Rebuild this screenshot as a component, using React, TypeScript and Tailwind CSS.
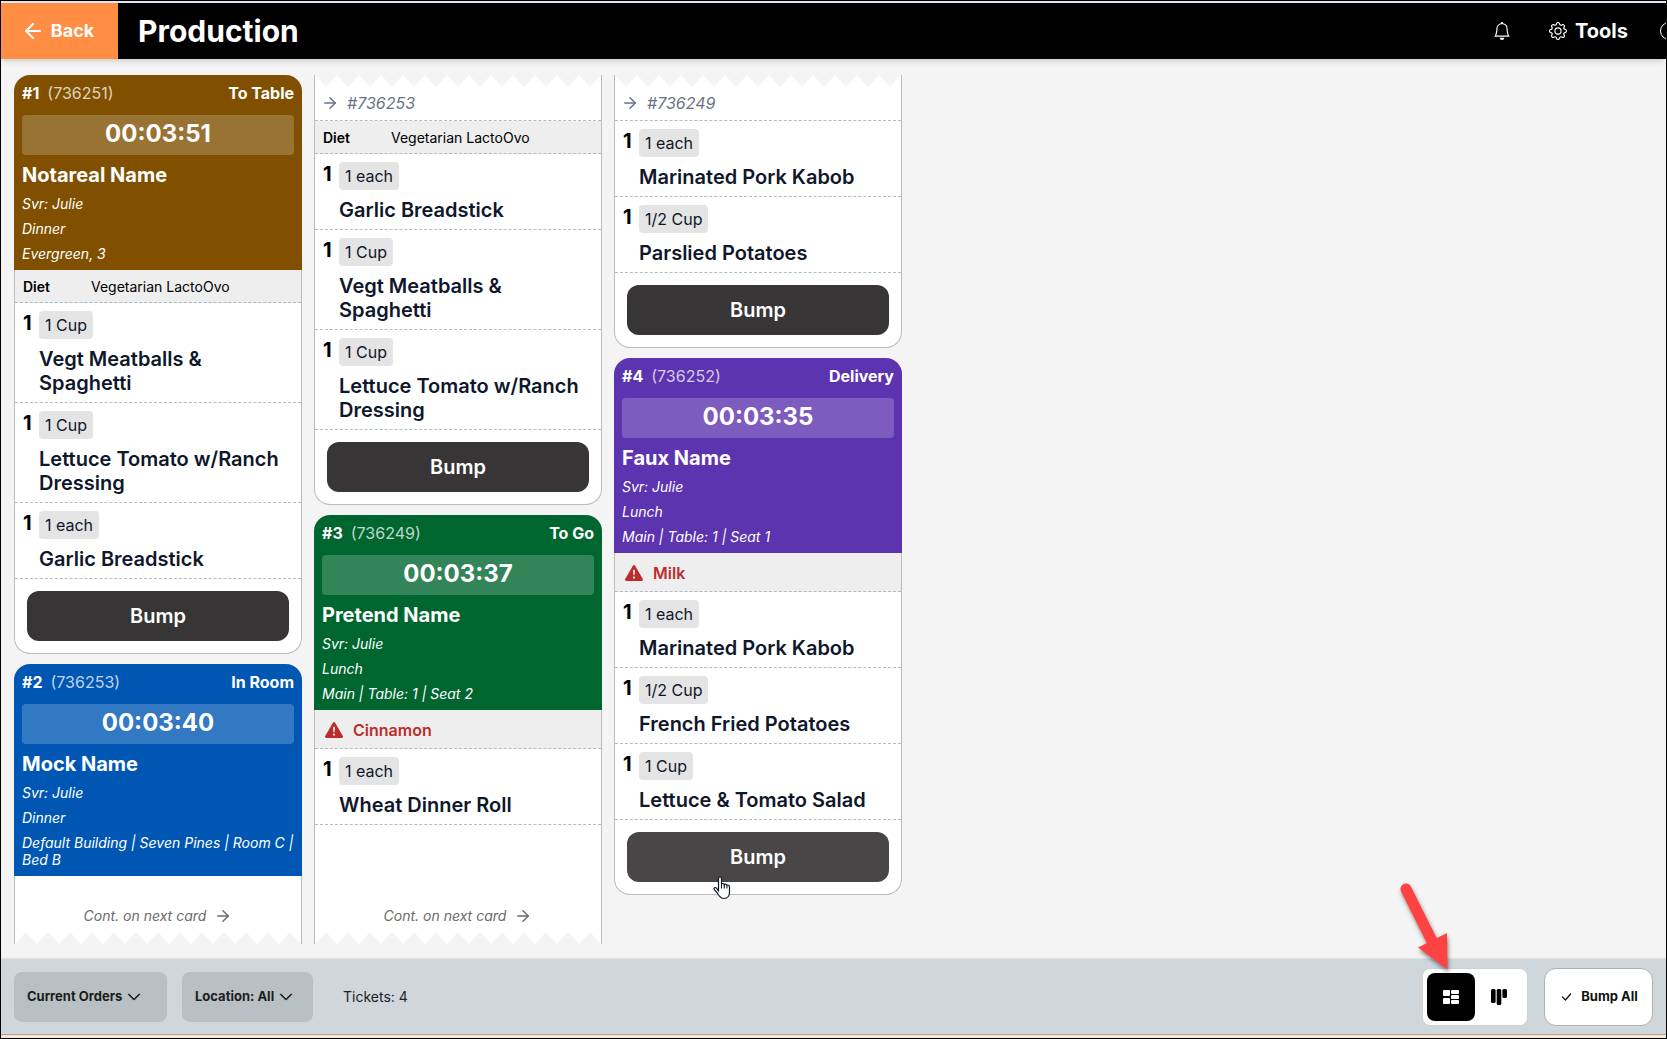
import type { ReactNode } from "react";
import clsx from "clsx";
import { ArrowLeft, ArrowRight } from "lucide-react";
import { BsBell, BsCheckLg, BsChevronDown, BsExclamationTriangleFill, BsGear } from "react-icons/bs";

interface Item {
  portion: string;
  name: string;
}

interface Ticket {
  number: number;
  order: string;
  type: string;
  color: string;
  timer: string;
  name: string;
  details: string[];
}

const notareal: Ticket = {
  number: 1,
  order: "736251",
  type: "To Table",
  color: "bg-[#805000]",
  timer: "00:03:51",
  name: "Notareal Name",
  details: ["Svr: Julie", "Dinner", "Evergreen, 3"],
};

const mock: Ticket = {
  number: 2,
  order: "736253",
  type: "In Room",
  color: "bg-[#0057b3]",
  timer: "00:03:40",
  name: "Mock Name",
  details: ["Svr: Julie", "Dinner", "Default Building | Seven Pines | Room C | Bed B"],
};

const pretend: Ticket = {
  number: 3,
  order: "736249",
  type: "To Go",
  color: "bg-[#00662f]",
  timer: "00:03:37",
  name: "Pretend Name",
  details: ["Svr: Julie", "Lunch", "Main | Table: 1 | Seat 2"],
};

const faux: Ticket = {
  number: 4,
  order: "736252",
  type: "Delivery",
  color: "bg-[#5c34b0]",
  timer: "00:03:35",
  name: "Faux Name",
  details: ["Svr: Julie", "Lunch", "Main | Table: 1 | Seat 1"],
};

/* Torn paper edge, drawn in the page background over the white card */
function TornEdge({ side }: { side: "top" | "bottom" }) {
  const id = `torn-${side}`;
  return (
    <svg className="block h-3 w-full shrink-0" aria-hidden="true">
      <defs>
        <pattern id={id} width="22" height="12" patternUnits="userSpaceOnUse">
          <path d={side === "top" ? "M0 0H22L11 12Z" : "M0 12H22L11 0Z"} fill="#f4f4f4" />
        </pattern>
      </defs>
      <rect width="100%" height="12" fill={`url(#${id})`} />
    </svg>
  );
}

function TicketHeader({ ticket }: { ticket: Ticket }) {
  return (
    <header className={clsx("rounded-t-2xl p-2 text-white", ticket.color)}>
      <div className="flex items-center justify-between text-base leading-5">
        <div className="flex gap-2">
          <span className="font-bold">#{ticket.number}</span>
          <span className="text-white/75">({ticket.order})</span>
        </div>
        <span className="font-bold">{ticket.type}</span>
      </div>
      <div className="mt-3 flex h-10 items-center justify-center rounded bg-white/20 pb-0.5 text-2xl font-bold">
        {ticket.timer}
      </div>
      <h2 className="mt-2 text-xl leading-6 font-bold">{ticket.name}</h2>
      {ticket.details.map((line) => (
        <p key={line} className="mt-2 text-sm leading-[17px] font-[450] italic">
          {line}
        </p>
      ))}
    </header>
  );
}

function Diet({ value }: { value: string }) {
  return (
    <div className="flex h-[33px] items-center border-b border-dashed border-[#afbec5] bg-[#eeeeee] px-2 pt-0.5 text-sm text-black">
      <span className="w-[68px] font-semibold">Diet</span>
      <span>{value}</span>
    </div>
  );
}

function Allergy({ value }: { value: string }) {
  return (
    <div className="flex h-[39px] items-center gap-2.5 border-b border-dashed border-[#afbec5] bg-[#eeeeee] px-2.5 pt-0.5 text-base font-semibold text-[#bd2c2c]">
      <BsExclamationTriangleFill className="h-[18px] w-[18px]" />
      {value}
    </div>
  );
}

function ItemList({ items }: { items: Item[] }) {
  return (
    <ul>
      {items.map((item) => (
        <li key={item.name} className="flex items-start gap-2 border-b border-dashed border-[#afbec5] px-2 pt-2 pb-[7px]">
          <span className="w-2 shrink-0 text-xl leading-6 font-bold text-black">1</span>
          <div>
            <span className="inline-flex h-7 items-center rounded bg-[#e4e4e4] px-1.5 align-top text-base text-slate-900">
              {item.portion}
            </span>
            <p className="mt-2 text-xl leading-6 font-semibold text-slate-900">{item.name}</p>
          </div>
        </li>
      ))}
    </ul>
  );
}

function BumpButton({ hovered }: { hovered?: boolean }) {
  return (
    <div className="relative p-3">
      <button
        type="button"
        className={clsx(
          "h-[50px] w-full rounded-xl text-xl font-semibold text-white",
          hovered ? "bg-[#484646]" : "bg-[#383536]",
        )}
      >
        Bump
      </button>
      {hovered && <HandCursor />}
    </div>
  );
}

function HandCursor() {
  return (
    <svg className="absolute top-14 left-[98px] h-6 w-[18px]" viewBox="0 0 18 24" aria-hidden="true">
      <path
        d="M5.5 14.8V2.7C5.5 1.5 6.2 1 7 1s1.500.5 1.500 1.700V8c.3-.7 2.500-.7 2.800.5.600-.6 2.300-.3 2.600.7 1-.5 2.600 0 2.600 1.500v5.300c0 3-1.600 6.500-5.500 6.500-3.600 0-5-2.500-6.300-4.800L1.200 13.500c-.8-1.400.8-2.600 2-1.600Z"
        fill="#fff"
        stroke="#111827"
        strokeWidth="1.2"
      />
      <path d="M8.500 7.500v5M11.300 8.500v4M13.900 9.200v3.300" stroke="#111827" strokeWidth="1.1" />
    </svg>
  );
}

function CardBody({ children, last, grow }: { children: ReactNode; last?: boolean; grow?: boolean }) {
  return (
    <div
      className={clsx(
        "flex flex-col border-x border-[#bcbcbc] bg-white",
        last && "rounded-b-2xl border-b",
        grow && "flex-1",
      )}
    >
      {children}
    </div>
  );
}

function ContinuedFrom({ order }: { order: string }) {
  return (
    <>
      <TornEdge side="top" />
      <div className="flex h-[34px] items-center gap-2 border-b border-dashed border-[#afbec5] px-1.5 pb-0.5 text-base text-gray-500 italic">
        <ArrowRight className="h-[18px] w-[18px]" />
        #{order}
      </div>
    </>
  );
}

function ContinuedOnNext() {
  return (
    <div className="mt-auto">
      <div className="flex items-center justify-center gap-2 pb-1.5 text-sm text-[#6b6b6b] italic">
        Cont. on next card
        <ArrowRight className="h-[18px] w-[18px]" />
      </div>
      <TornEdge side="bottom" />
    </div>
  );
}

function TopBar() {
  return (
    <header className="relative z-10 flex h-[58px] shrink-0 items-stretch overflow-x-clip border-t-2 border-slate-200 bg-black text-white shadow-md">
      <button type="button" className="flex w-[117px] shrink-0 items-center justify-center gap-1.5 bg-[#ff8d43] pr-1 text-lg font-bold">
        <ArrowLeft className="h-6 w-6" />
        Back
      </button>
      <h1 className="flex items-center pl-5 text-[30px] font-bold">Production</h1>
      <div className="ml-auto flex items-center">
        <button type="button" aria-label="Notifications" className="mr-[38px]">
          <BsBell className="h-[18px] w-[18px]" />
        </button>
        <button type="button" className="flex items-center gap-2 text-xl font-bold">
          <BsGear className="h-[18px] w-[18px]" />
          Tools
        </button>
        <button type="button" aria-label="Help" className="-mr-3 ml-8 h-[18px] w-[18px] rounded-full border border-white" />
      </div>
    </header>
  );
}

function Filter({ label, value, width }: { label: string; value: string; width: string }) {
  return (
    <label className={clsx("flex h-[50px] items-center rounded-lg bg-[#b9c0c3] pl-[13px] text-[#1c1c1c]", width)}>
      <select aria-label={label} className="appearance-none bg-transparent text-[13px] font-bold outline-none">
        <option>{value}</option>
      </select>
      <BsChevronDown className="ml-1 h-3.5 w-3.5 stroke-1" />
    </label>
  );
}

function PointerArrow() {
  return (
    <svg
      className="pointer-events-none absolute right-[78px] bottom-[50px] h-[100px] w-14 drop-shadow-[1px_3px_2px_rgba(0,0,0,0.45)]"
      viewBox="0 0 56 100"
      aria-hidden="true"
    >
      <path d="M13 14 39 66" stroke="#ff4343" strokeWidth="11" strokeLinecap="round" />
      <path d="M54.500 94.500 25 72.500 54 58Z" fill="#ff4343" />
    </svg>
  );
}

function BottomBar() {
  return (
    <footer className="relative z-10 flex h-[75px] shrink-0 items-center bg-[#cfd7dd] px-[13px] shadow-[0_0_2px_rgba(0,0,0,0.2)]">
      <Filter label="Order status" value="Current Orders" width="w-[153px]" />
      <div className="ml-[15px]">
        <Filter label="Location" value="Location: All" width="w-[131px]" />
      </div>
      <span className="ml-[30px] text-sm text-[#222]">Tickets: 4</span>
      <div className="relative ml-auto flex rounded-lg border border-[#d0d0d0] bg-white p-1">
        <button
          type="button"
          aria-label="Flow layout"
          aria-pressed="true"
          className="flex h-12 w-12 items-center justify-center rounded-lg bg-black"
        >
          <svg className="h-4 w-4" viewBox="0 0 16 16" fill="#fff" aria-hidden="true">
            <rect x="0" y="1" width="7" height="6" rx="1" />
            <rect x="0" y="9" width="7" height="6" rx="1" />
            <rect x="8" y="1" width="8" height="4" rx="1" />
            <rect x="8" y="6" width="8" height="4" rx="1" />
            <rect x="8" y="11" width="8" height="4" rx="1" />
          </svg>
        </button>
        <button type="button" aria-label="Column layout" className="flex h-12 w-12 items-center justify-center rounded-lg">
          <svg className="h-4 w-4" viewBox="0 0 16 16" aria-hidden="true">
            <rect x="0" y="0" width="4.600" height="14" rx="1.500" />
            <rect x="5.700" y="0" width="4.600" height="16" rx="1.500" />
            <rect x="11.400" y="0" width="4.600" height="9" rx="1.500" />
          </svg>
        </button>
        <PointerArrow />
      </div>
      <button
        type="button"
        className="ml-4 flex h-[58px] w-[109px] items-center justify-center gap-2 rounded-xl border border-[#b0b0b0] bg-white text-[13px] font-bold text-[#111]"
      >
        <BsCheckLg className="h-3.5 w-3.5" />
        Bump All
      </button>
    </footer>
  );
}

export default function App() {
  return (
    <div className="flex h-screen flex-col overflow-hidden border border-black bg-[#f4f4f4] font-['Inter',sans-serif]">
      <TopBar />

      <main className="flex min-h-0 flex-1 gap-3 px-[13px] pt-4 pb-[15px]">
        {/* Column 1 */}
        <section className="flex w-72 shrink-0 flex-col gap-2.5">
          <article>
            <TicketHeader ticket={notareal} />
            <CardBody last>
              <Diet value="Vegetarian LactoOvo" />
              <ItemList
                items={[
                  { portion: "1 Cup", name: "Vegt Meatballs & Spaghetti" },
                  { portion: "1 Cup", name: "Lettuce Tomato w/Ranch Dressing" },
                  { portion: "1 each", name: "Garlic Breadstick" },
                ]}
              />
              <BumpButton />
            </CardBody>
          </article>
          <article className="flex flex-1 flex-col">
            <TicketHeader ticket={mock} />
            <CardBody grow>
              <ContinuedOnNext />
            </CardBody>
          </article>
        </section>

        {/* Column 2 */}
        <section className="flex w-72 shrink-0 flex-col gap-2.5">
          <article>
            <CardBody last>
              <ContinuedFrom order="736253" />
              <Diet value="Vegetarian LactoOvo" />
              <ItemList
                items={[
                  { portion: "1 each", name: "Garlic Breadstick" },
                  { portion: "1 Cup", name: "Vegt Meatballs & Spaghetti" },
                  { portion: "1 Cup", name: "Lettuce Tomato w/Ranch Dressing" },
                ]}
              />
              <BumpButton />
            </CardBody>
          </article>
          <article className="flex flex-1 flex-col">
            <TicketHeader ticket={pretend} />
            <CardBody grow>
              <Allergy value="Cinnamon" />
              <ItemList items={[{ portion: "1 each", name: "Wheat Dinner Roll" }]} />
              <ContinuedOnNext />
            </CardBody>
          </article>
        </section>

        {/* Column 3 */}
        <section className="flex w-72 shrink-0 flex-col gap-2.5">
          <article>
            <CardBody last>
              <ContinuedFrom order="736249" />
              <ItemList
                items={[
                  { portion: "1 each", name: "Marinated Pork Kabob" },
                  { portion: "1/2 Cup", name: "Parslied Potatoes" },
                ]}
              />
              <BumpButton />
            </CardBody>
          </article>
          <article>
            <TicketHeader ticket={faux} />
            <CardBody last>
              <Allergy value="Milk" />
              <ItemList
                items={[
                  { portion: "1 each", name: "Marinated Pork Kabob" },
                  { portion: "1/2 Cup", name: "French Fried Potatoes" },
                  { portion: "1 Cup", name: "Lettuce & Tomato Salad" },
                ]}
              />
              <BumpButton hovered />
            </CardBody>
          </article>
        </section>
      </main>

      <BottomBar />
      <div className="h-1 shrink-0 border-t border-[#b5aea6] bg-[#fde7d0]" />
    </div>
  );
}
